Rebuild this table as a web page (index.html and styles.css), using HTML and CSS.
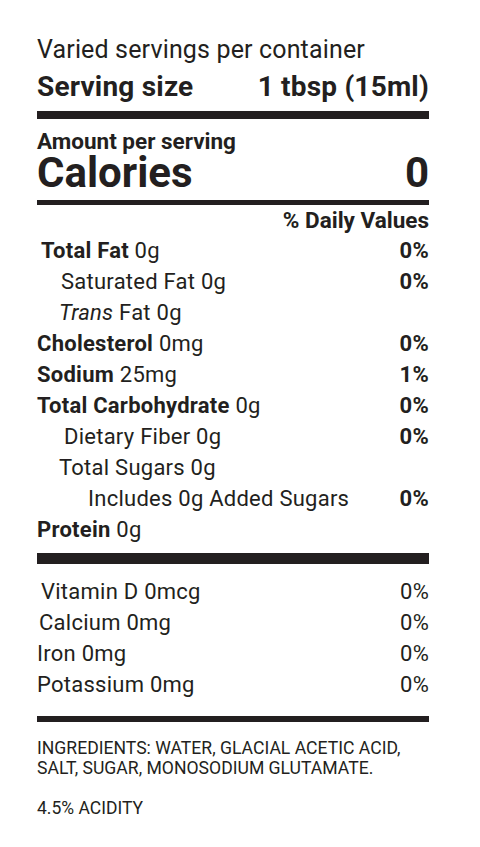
FILE: index.html
```html
<!DOCTYPE html>
<html lang="en">
    <head>
        <meta charset="UTF-8" />
        <meta name="viewport" content="width=device-width, initial-scale=1.0" />
        <title>Nutrition Facts</title>
        <link rel="stylesheet" href="styles.css">
    </head>
    <body>
        <div class="label">
            <p class="servings">Varied servings per container</p>
            <div class="serving-size">
                <span>Serving size</span>
                <span>1 tbsp (15ml)</span>
            </div>
            <div class="bar bar-thick"></div>

            <p class="amount">Amount per serving</p>
            <div class="calories">
                <span>Calories</span>
                <span>0</span>
            </div>
            <div class="bar bar-mid"></div>

            <p class="dv-head">% Daily Values</p>
            <ul class="rows">
                <li class="row nudge"><span><b>Total Fat</b> 0g</span><b>0%</b></li>
                <li class="row indent"><span>Saturated Fat 0g</span><b>0%</b></li>
                <li class="row indent-trans"><span><i>Trans</i> Fat 0g</span></li>
                <li class="row"><span><b>Cholesterol</b> 0mg</span><b>0%</b></li>
                <li class="row"><span><b>Sodium</b> 25mg</span><b>1%</b></li>
                <li class="row"><span><b>Total Carbohydrate</b> 0g</span><b>0%</b></li>
                <li class="row indent-fiber"><span>Dietary Fiber 0g</span><b>0%</b></li>
                <li class="row indent-trans"><span>Total Sugars 0g</span></li>
                <li class="row indent-added"><span>Includes 0g Added Sugars</span><b>0%</b></li>
                <li class="row"><span><b>Protein</b> 0g</span></li>
            </ul>
            <div class="bar bar-heavy"></div>

            <ul class="rows vitamins">
                <li class="row nudge"><span>Vitamin D 0mcg</span><span>0%</span></li>
                <li class="row nudge-sm"><span>Calcium 0mg</span><span>0%</span></li>
                <li class="row"><span>Iron 0mg</span><span>0%</span></li>
                <li class="row"><span>Potassium 0mg</span><span>0%</span></li>
            </ul>
            <div class="bar bar-thin"></div>

            <p class="ingredients">INGREDIENTS: WATER, GLACIAL ACETIC ACID,<br>SALT, SUGAR, MONOSODIUM GLUTAMATE.</p>
            <p class="acidity">4.5% ACIDITY</p>
        </div>
    </body>
</html>
```

FILE: styles.css
```css
* {
    padding: 0;
    margin: 0;
    box-sizing: border-box;
}
body {
    font-family: Roboto, "Liberation Sans", sans-serif;
    color: #231f20;
    background-color: #fff;
}
.label {
    width: 392px;
    margin-left: 37px;
    padding-top: 36px;
}
.bar {
    background-color: #231f20;
}
.bar-thick {
    height: 8px;
    margin-top: 9px;
}
.bar-mid {
    height: 5px;
    margin-top: 7px;
}
.bar-heavy {
    height: 11px;
    margin-top: 8px;
}
.bar-thin {
    height: 6px;
    margin-top: 16px;
}
.servings {
    font-size: 25px;
    line-height: 28px;
    letter-spacing: 0.15px;
}
.serving-size {
    display: flex;
    justify-content: space-between;
    margin-top: 8px;
    font-size: 28px;
    line-height: 30px;
    font-weight: 700;
    letter-spacing: 0.2px;
}
.amount {
    margin-top: 10px;
    font-size: 22.5px;
    line-height: 24px;
    font-weight: 700;
}
.calories {
    display: flex;
    justify-content: space-between;
    font-size: 42px;
    line-height: 40px;
    font-weight: 700;
}
.dv-head {
    margin-top: 2px;
    text-align: right;
    font-size: 22.5px;
    line-height: 26px;
    font-weight: 700;
}
.rows {
    list-style: none;
    margin-top: 2px;
}
.vitamins {
    margin-top: 12px;
}
.row {
    display: flex;
    justify-content: space-between;
    font-size: 22px;
    line-height: 31px;
    letter-spacing: 0.25px;
}
.row b {
    font-weight: 700;
}
.nudge {
    padding-left: 4px;
}
.nudge-sm {
    padding-left: 2px;
}
.indent {
    padding-left: 24px;
}
.indent-trans {
    padding-left: 22px;
}
.indent-fiber {
    padding-left: 27px;
}
.indent-added {
    padding-left: 51px;
}
.ingredients {
    margin-top: 16px;
    font-size: 17.6px;
    line-height: 20px;
}
.acidity {
    margin-top: 20px;
    font-size: 17.5px;
    line-height: 20px;
}
```
